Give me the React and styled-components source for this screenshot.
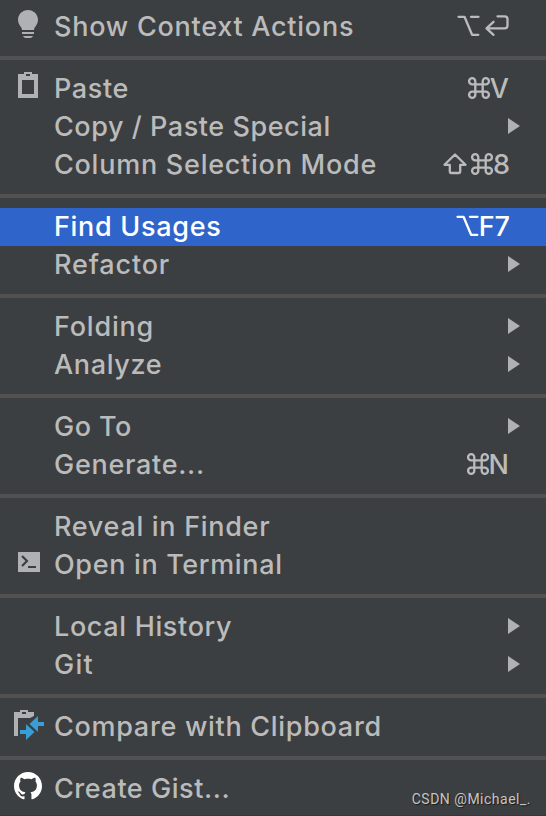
import React from 'react';
import styled, { createGlobalStyle } from 'styled-components';

const GlobalStyle = createGlobalStyle`
  body {
    margin: 0;
    background: #3c3f41;
  }
`;

const Menu = styled.div`
  position: relative;
  box-sizing: border-box;
  width: 546px;
  height: 816px;
  padding-top: 8px;
  overflow: hidden;
  background: #3c3f41;
  border-bottom: 1px solid #343638;
  font-family: Inter, 'Liberation Sans', sans-serif;
  font-size: 27px;
  font-weight: 450;
`;

const Separator = styled.div`
  height: 4px;
  margin: 10px 0;
  background: #515151;
`;

const Row = styled.div`
  display: flex;
  align-items: flex-start;
  height: 38px;
  color: ${({ $selected }) => ($selected ? '#ffffff' : '#bbbbbb')};
  background: ${({ $selected }) => ($selected ? '#2f65ca' : 'transparent')};
`;

const IconSlot = styled.div`
  flex: none;
  width: 32px;
  height: 32px;
  margin: 0 10px 0 12px;
  color: #afb1b3;

  svg {
    display: block;
  }
`;

const Label = styled.span`
  flex: 1;
  line-height: 37px;
  letter-spacing: ${({ $spacing }) => $spacing}px;
  white-space: nowrap;
`;

const Shortcut = styled.span`
  display: flex;
  margin-right: ${({ $end }) => $end}px;
  line-height: 37px;

  svg {
    flex: none;
    margin-top: 6px;
    margin-right: ${({ $gap }) => $gap}px;
  }

  svg:last-child {
    margin-right: 0;
  }
`;

const Arrow = styled.svg`
  flex: none;
  margin: 10px 26px 0 0;
  fill: #afb1b3;
`;

const Watermark = styled.div`
  position: absolute;
  right: 15px;
  bottom: 7px;
  font-family: Roboto, sans-serif;
  font-size: 14px;
  font-weight: 400;
  line-height: 18px;
  letter-spacing: 0.5px;
  white-space: nowrap;
  color: #c4c5c6;
  text-shadow: 1px 1px 1px rgba(0, 0, 0, 0.6);
`;

const Icon = ({ children }) => (
  <svg width="32" height="32" viewBox="0 0 32 32" fill="currentColor">
    {children}
  </svg>
);

const BulbIcon = () => (
  <Icon>
    <path d="M16 2C10.5 2 6 6.3 6 11.8c0 3 1.2 4.9 2.5 6.6.9 1.2 1.5 2.2 1.5 3.6h12c0-1.4.6-2.4 1.5-3.6 1.3-1.7 2.5-3.6 2.5-6.6C26 6.3 21.5 2 16 2zM10 24h12v2H10zM11 28h10c-.5 1.3-1.5 2-3 2h-4c-1.5 0-2.5-.7-3-2z" />
  </Icon>
);

const PasteIcon = () => (
  <Icon>
    <path
      fillRule="evenodd"
      d="M12 2h8v2h6v24H6V4h6zM14 4v2h4V4zM10 10v14h12V10z"
    />
  </Icon>
);

const TerminalIcon = () => (
  <Icon>
    <path d="M6 6h22v20H6z" />
    <path d="M10 10l5 5-5 5M16 21h8" fill="none" stroke="#3c3f41" strokeWidth="2.2" />
  </Icon>
);

const CompareIcon = () => (
  <Icon>
    <path fillRule="evenodd" d="M8 2h8v2h6v4l-4 2H6v18H2V4h6zM10 4v2h4V4z" />
    <path
      fill="#389fd6"
      d="M17.5 16L26 8v6h6v4h-6v6zM8 22h6v-6l8.500 8L14 32v-6H8z"
    />
  </Icon>
);

const GithubIcon = () => (
  <Icon>
    <path
      fill="#ffffff"
      transform="translate(2 1.7) scale(1.1667)"
      d="M12 .297c-6.63 0-12 5.373-12 12 0 5.303 3.438 9.8 8.205 11.385.6.113.82-.258.82-.577 0-.285-.01-1.04-.015-2.04-3.338.724-4.042-1.61-4.042-1.61C4.422 18.07 3.633 17.7 3.633 17.7c-1.087-.744.084-.729.084-.729 1.205.084 1.838 1.236 1.838 1.236 1.07 1.835 2.809 1.305 3.495.998.108-.776.417-1.305.76-1.605-2.665-.3-5.466-1.332-5.466-5.93 0-1.31.465-2.38 1.235-3.22-.135-.303-.54-1.523.105-3.176 0 0 1.005-.322 3.3 1.23.96-.267 1.98-.399 3-.405 1.02.006 2.04.138 3 .405 2.28-1.552 3.285-1.23 3.285-1.23.645 1.653.24 2.873.12 3.176.765.84 1.23 1.91 1.23 3.22 0 4.61-2.805 5.625-5.475 5.92.42.36.81 1.096.81 2.22 0 1.606-.015 2.896-.015 3.286 0 .315.21.69.825.57C20.565 22.092 24 17.592 24 12.297c0-6.627-5.373-12-12-12"
    />
  </Icon>
);

const KeyIcon = ({ width, label, d }) => (
  <svg
    width={width}
    height="24"
    viewBox={`0 0 ${width} 24`}
    fill="none"
    stroke="currentColor"
    strokeWidth="2.3"
    strokeLinecap="round"
    strokeLinejoin="round"
    aria-label={label}
  >
    <path d={d} />
  </svg>
);

const keys = {
  option: (
    <KeyIcon key="option" width={23} label="Option" d="M1.5 2.8H7.5l7.6 18h6.2M14 2.8h7.5" />
  ),
  enter: (
    <KeyIcon
      key="enter"
      width={24}
      label="Return"
      d="M12.5 2.3h7.200q2.800 0 2.800 2.800v6.400q0 2.800-2.800 2.800H1.500M8.500 7.800l-7 6.500 7 6.500"
    />
  ),
  command: (
    <KeyIcon
      key="command"
      width={22}
      label="Command"
      d="M7.3 8.300h7.400v7.400H7.300zM7.300 8.300H4.200a3.100 3.100 0 1 1 3.100-3.100zM14.700 8.300V5.200a3.100 3.100 0 1 1 3.100 3.100zM14.700 15.700h3.100a3.100 3.100 0 1 1-3.100 3.100zM7.300 15.700v3.100a3.100 3.100 0 1 1-3.100-3.100z"
    />
  ),
  shift: (
    <KeyIcon
      key="shift"
      width={24}
      label="Shift"
      d="M12 2.500l10.500 10.300h-5.300v7q0 1.200-1.200 1.200H8q-1.200 0-1.200-1.200v-7H1.500z"
    />
  ),
};

const groups = [
  [
    {
      label: 'Show Context Actions',
      spacing: 0.75,
      icon: <BulbIcon />,
      keys: ['option', 'enter'],
      gap: 5,
      end: 37,
    },
  ],
  [
    { label: 'Paste', icon: <PasteIcon />, keys: ['command'], text: 'V', gap: 4, end: 37 },
    { label: 'Copy / Paste Special', spacing: 0.55, submenu: true },
    {
      label: 'Column Selection Mode',
      spacing: 0.75,
      keys: ['shift', 'command'],
      text: '8',
      gap: 4.5,
      end: 36,
    },
  ],
  [
    {
      label: 'Find Usages',
      spacing: 0.7,
      selected: true,
      keys: ['option'],
      text: 'F7',
      gap: 4,
      end: 36,
    },
    { label: 'Refactor', spacing: 0.85, submenu: true },
  ],
  [
    { label: 'Folding', spacing: 0.8, submenu: true },
    { label: 'Analyze', submenu: true },
  ],
  [
    { label: 'Go To', spacing: 0.45, submenu: true },
    { label: 'Generate...', spacing: 0.7, keys: ['command'], text: 'N', gap: 3.5, end: 37 },
  ],
  [
    { label: 'Reveal in Finder', spacing: 0.7 },
    { label: 'Open in Terminal', icon: <TerminalIcon /> },
  ],
  [
    { label: 'Local History', submenu: true },
    { label: 'Git', spacing: 1.2, submenu: true },
  ],
  [{ label: 'Compare with Clipboard', spacing: 0.7, icon: <CompareIcon /> }],
  [{ label: 'Create Gist...', spacing: 0.55, icon: <GithubIcon /> }],
];

const MenuItem = ({ item }) => (
  <Row $selected={item.selected}>
    <IconSlot>{item.icon}</IconSlot>
    <Label $spacing={item.spacing ?? 0.65}>{item.label}</Label>
    {item.keys && (
      <Shortcut $gap={item.gap} $end={item.end}>
        {item.keys.map((name) => keys[name])}
        {item.text}
      </Shortcut>
    )}
    {item.submenu && (
      <Arrow width="12" height="16" viewBox="0 0 12 16">
        <path d="M0 0l12 8-12 8z" />
      </Arrow>
    )}
  </Row>
);

const App = () => (
  <>
    <GlobalStyle />
    <Menu>
      {groups.map((items, index) => (
        <React.Fragment key={items[0].label}>
          {index > 0 && <Separator />}
          {items.map((item) => (
            <MenuItem key={item.label} item={item} />
          ))}
        </React.Fragment>
      ))}
      <Watermark>CSDN @Michael_.</Watermark>
    </Menu>
  </>
);

export default App;
